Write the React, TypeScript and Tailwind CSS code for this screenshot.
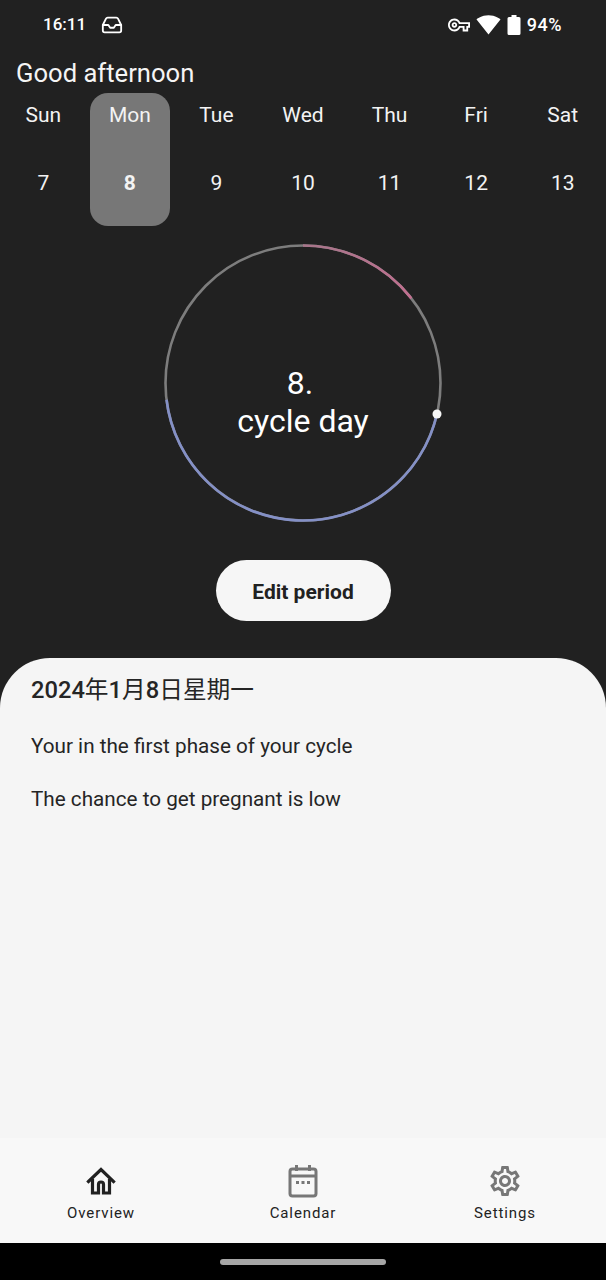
import React from 'react';
import { Inbox } from 'lucide-react';
import { MdOutlineSettings, MdOutlineVpnKey, MdSignalWifi4Bar } from 'react-icons/md';

const days = [
  { name: 'Sun', date: 7 },
  { name: 'Mon', date: 8, active: true },
  { name: 'Tue', date: 9 },
  { name: 'Wed', date: 10 },
  { name: 'Thu', date: 11 },
  { name: 'Fri', date: 12 },
  { name: 'Sat', date: 13 },
];

// point on the ring, degrees clockwise from 12 o'clock
const pt = (deg: number, r = 137.5) => {
  const a = (deg * Math.PI) / 180;
  return `${(140 + r * Math.sin(a)).toFixed(2)} ${(140 - r * Math.cos(a)).toFixed(2)}`;
};
const arc = (from: number, to: number) =>
  `M ${pt(from)} A 137.5 137.5 0 ${to - from > 180 ? 1 : 0} 1 ${pt(to)}`;

const CycleRing = () => (
  <svg width="280" height="280" viewBox="0 0 280 280" fill="none">
    <defs>
      <linearGradient id="pink" x1="0" y1="0" x2="1" y2="1">
        <stop offset="0" stopColor="#a8758a" />
        <stop offset="1" stopColor="#c26f90" />
      </linearGradient>
    </defs>
    <circle cx="140" cy="140" r="137.5" stroke="#7d7d7d" strokeWidth="2.6" />
    <path d={arc(0, 52)} stroke="url(#pink)" strokeWidth="2.6" />
    <path d={arc(103, 263)} stroke="#8490c6" strokeWidth="2.6" />
    <circle cx="274" cy="171" r="4.5" fill="#f7f7f7" />
  </svg>
);

const StatusBar = () => (
  <div className="h-[48px] flex items-center justify-between pl-[43px] pr-[44px] pt-[1px] text-white text-[17px] font-medium">
    <div className="flex items-center gap-[15px]">
      <span>16:11</span>
      <Inbox size={22} strokeWidth={2} />
    </div>
    <div className="flex items-center">
      <MdOutlineVpnKey size={22} className="mr-[6px]" />
      <MdSignalWifi4Bar size={25} className="mr-[6px]" />
      <svg width="14" height="20" viewBox="0 0 14 20" className="mr-[6px]">
        <path d="M4.5 0h5v2H12a1.5 1.5 0 0 1 1.5 1.5v15A1.5 1.5 0 0 1 12 20H2a1.5 1.5 0 0 1-1.5-1.5v-15A1.5 1.5 0 0 1 2 2h2.5z" fill="#fff" />
      </svg>
      <span className="text-[18px] tracking-[0.5px]">94%</span>
    </div>
  </div>
);

const NavItem = ({ icon, label }: { icon: React.ReactNode; label: string }) => (
  <div className="flex flex-col items-center">
    <div className="h-[34px] flex items-center justify-center">{icon}</div>
    <span className="text-[15px] leading-[20px] tracking-[0.9px] text-[#222] mt-[5px]">{label}</span>
  </div>
);

const App: React.FC = () => {
  return (
    <div className="h-[1280px] flex flex-col bg-[#212121] overflow-hidden font-['Roboto',sans-serif]">
      <StatusBar />
      <h1 className="pl-[16px] text-[25.6px] leading-[34px] text-[#f5f5f5] mt-[8px]">Good afternoon</h1>

      {/* Week strip */}
      <div className="grid grid-cols-7 mt-[3px]">
        {days.map((d) => (
          <div
            key={d.name}
            className={`h-[133px] mx-[3px] flex flex-col items-center rounded-[18px] text-[#f3f3f3] ${d.active ? 'bg-[#777777]' : ''}`}
          >
            <span className="text-[21px] leading-[28px] mt-[8px]">{d.name}</span>
            <span className={`text-[21px] leading-[28px] mt-[40px] ${d.active ? 'font-bold' : ''}`}>{d.date}</span>
          </div>
        ))}
      </div>

      {/* Cycle ring */}
      <div className="relative w-[280px] h-[280px] self-center mt-[17px]">
        <CycleRing />
        <div className="absolute inset-0 flex flex-col items-center justify-center text-white text-[32px] leading-[38px] pt-[37px]">
          <span className="pr-[6px]">8.</span>
          <span>cycle day</span>
        </div>
      </div>

      <button className="self-center w-[175px] h-[61px] pt-[4px] mt-[37px] rounded-full bg-[#f6f6f6] text-[#212121] text-[21px] font-bold">
        Edit period
      </button>

      {/* Bottom sheet */}
      <div className="flex-1 mt-[37px] rounded-t-[50px] bg-[#f5f5f5] pl-[31px] text-[#252525]">
        <p className="text-[23.7px] leading-[32px] mt-[16px] font-['Roboto','Noto_Sans_CJK_SC',sans-serif]">
          <span className="font-medium">2024</span>年<span className="font-medium">1</span>月<span className="font-medium">8</span>日星期一
        </p>
        <p className="text-[20.7px] leading-[28px] mt-[26px]">Your in the first phase of your cycle</p>
        <p className="text-[20.7px] leading-[28px] mt-[25px]">The chance to get pregnant is low</p>
      </div>

      <nav className="h-[105px] bg-[#f8f8f8] grid grid-cols-3 pt-[26px]">
        <NavItem
          label="Overview"
          icon={
            <svg width="30" height="30" viewBox="0 0 30 30" fill="none" stroke="#212121" strokeWidth="3.2">
              <path d="M2.5 15.5 15 3.5l12.5 12" strokeLinecap="square" />
              <path d="M6.5 13v14h6v-8.5a2.5 2.5 0 0 1 5 0V27h6V13" />
            </svg>
          }
        />
        <NavItem
          label="Calendar"
          icon={
            <svg width="30" height="34" viewBox="0 0 30 34" fill="none" stroke="#777" strokeWidth="3">
              <rect x="2" y="5" width="26" height="27" rx="2.5" />
              <path d="M2 12h26" />
              <path d="M8.5 1v6M21.5 1v6" />
              <path d="M8 18.5h3M13.5 18.5h3M19 18.5h3" strokeWidth="3" />
            </svg>
          }
        />
        <NavItem label="Settings" icon={<MdOutlineSettings size={36} color="#777" />} />
      </nav>

      {/* Android gesture bar */}
      <div className="h-[37px] bg-black flex items-center justify-center">
        <div className="w-[166px] h-[6px] rounded-full bg-[#a6a6a6]" />
      </div>
    </div>
  );
};

export default App;
